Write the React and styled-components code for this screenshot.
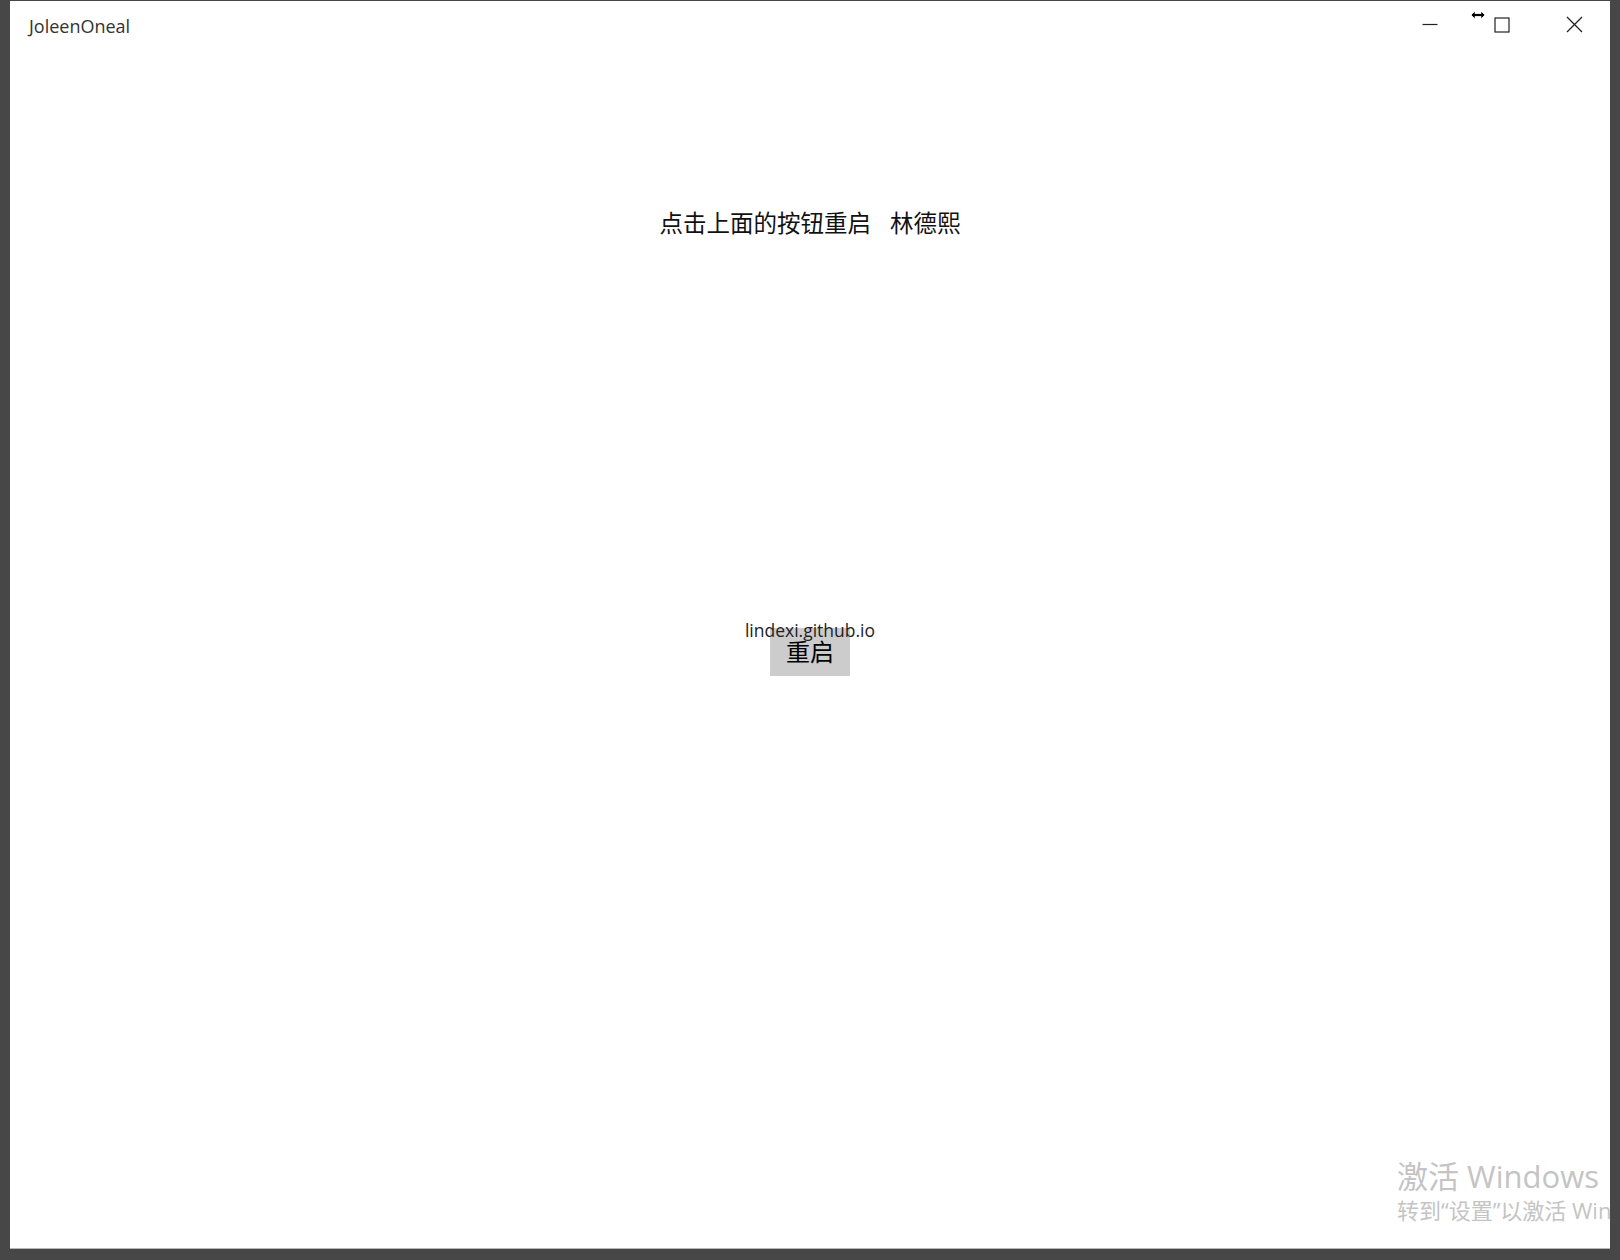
import React from "react";
import styled, { createGlobalStyle } from "styled-components";

const GlobalStyle = createGlobalStyle`
  html, body {
    margin: 0;
    padding: 0;
    width: 1620px;
    height: 1260px;
    overflow: hidden;
    background: #474747;
  }
  * { box-sizing: border-box; }
`;

const Window = styled.div`
  position: relative;
  margin: 1px 0 0 10px;
  width: 1600px;
  height: 1248px;
  background: #ffffff;
  display: flex;
  flex-direction: column;
  overflow: hidden;
  border-bottom: 1px solid #b8b8b8;
`;

const TitleBar = styled.div`
  height: 50px;
  display: flex;
  align-items: center;
  padding-left: 19px;
  flex-shrink: 0;
`;

const Title = styled.span`
  font-family: "Open Sans", "Noto Sans", sans-serif;
  font-size: 18px;
  color: #333333;
`;

const Controls = styled.div`
  margin-left: auto;
  display: flex;
  height: 100%;
  padding-bottom: 3px;
`;

const ControlButton = styled.div`
  width: 72px;
  height: 100%;
  display: flex;
  align-items: center;
  justify-content: center;
  color: #222222;
`;

const Cursor = styled.svg`
  position: absolute;
  left: 1460px;
  top: 9px;
`;

const Client = styled.div`
  flex: 1;
  display: grid;
  padding-top: 5px;
`;

const Heading = styled.div`
  grid-area: 1 / 1;
  align-self: start;
  justify-self: center;
  margin-top: 151px;
  font-family: "Noto Sans CJK SC", sans-serif;
  font-size: 23.5px;
  line-height: 30px;
  color: #111111;
  white-space: nowrap;
`;

const Name = styled.span`
  margin-left: 19px;
`;

const ButtonWrap = styled.div`
  grid-area: 1 / 1;
  align-self: center;
  justify-self: center;
  position: relative;
`;

const RestartButton = styled.button`
  width: 80px;
  height: 48px;
  border: none;
  padding: 0 0 3px;
  background: #cccccc;
  font-family: "Noto Sans CJK SC", sans-serif;
  font-size: 24px;
  color: #000000;
  display: flex;
  align-items: center;
  justify-content: center;
`;

const Link = styled.span`
  position: absolute;
  top: -9px;
  left: 50%;
  transform: translateX(-50%);
  font-family: "Open Sans", "Noto Sans", sans-serif;
  font-size: 17.5px;
  line-height: 22px;
  color: #222222;
  white-space: nowrap;
  pointer-events: none;
`;

const Watermark = styled.div`
  position: absolute;
  left: 1387px;
  top: 1156px;
  font-family: "Open Sans", "Noto Sans CJK SC", sans-serif;
  color: #c4c4c4;
  white-space: nowrap;
`;

const WatermarkLine = styled.div`
  font-size: ${(p) => p.size}px;
  line-height: ${(p) => p.lh}px;
`;

export default function App() {
  return (
    <>
      <GlobalStyle />
      <Window>
        <TitleBar>
          <Title>JoleenOneal</Title>
          <Controls>
            <ControlButton>
              <svg width="16" height="16" viewBox="0 0 16 16">
                <line x1="0.5" y1="7.5" x2="15.5" y2="7.5" stroke="currentColor" strokeWidth="1.2" />
              </svg>
            </ControlButton>
            <ControlButton>
              <svg width="16" height="16" viewBox="0 0 16 16">
                <rect x="1" y="1" width="14" height="14" fill="none" stroke="currentColor" strokeWidth="1.2" />
              </svg>
            </ControlButton>
            <ControlButton>
              <svg width="17" height="17" viewBox="0 0 17 17">
                <path d="M1 1 L16 16 M16 1 L1 16" stroke="currentColor" strokeWidth="1.3" />
              </svg>
            </ControlButton>
          </Controls>
        </TitleBar>
        <Cursor width="16" height="10" viewBox="0 0 16 10">
          <path
            d="M1 5 L5 1 L5 3.5 L11 3.5 L11 1 L15 5 L11 9 L11 6.5 L5 6.5 L5 9 Z"
            fill="#000000"
            stroke="#ffffff"
            strokeWidth="0.8"
          />
        </Cursor>
        <Client>
          <Heading>
            <span>点击上面的按钮重启</span>
            <Name>林德熙</Name>
          </Heading>
          <ButtonWrap>
            <RestartButton>重启</RestartButton>
            <Link>lindexi.github.io</Link>
          </ButtonWrap>
        </Client>
        <Watermark>
          <WatermarkLine size={31} lh={38}>激活 Windows</WatermarkLine>
          <WatermarkLine size={22} lh={30}>转到“设置”以激活 Windows。</WatermarkLine>
        </Watermark>
      </Window>
    </>
  );
}
